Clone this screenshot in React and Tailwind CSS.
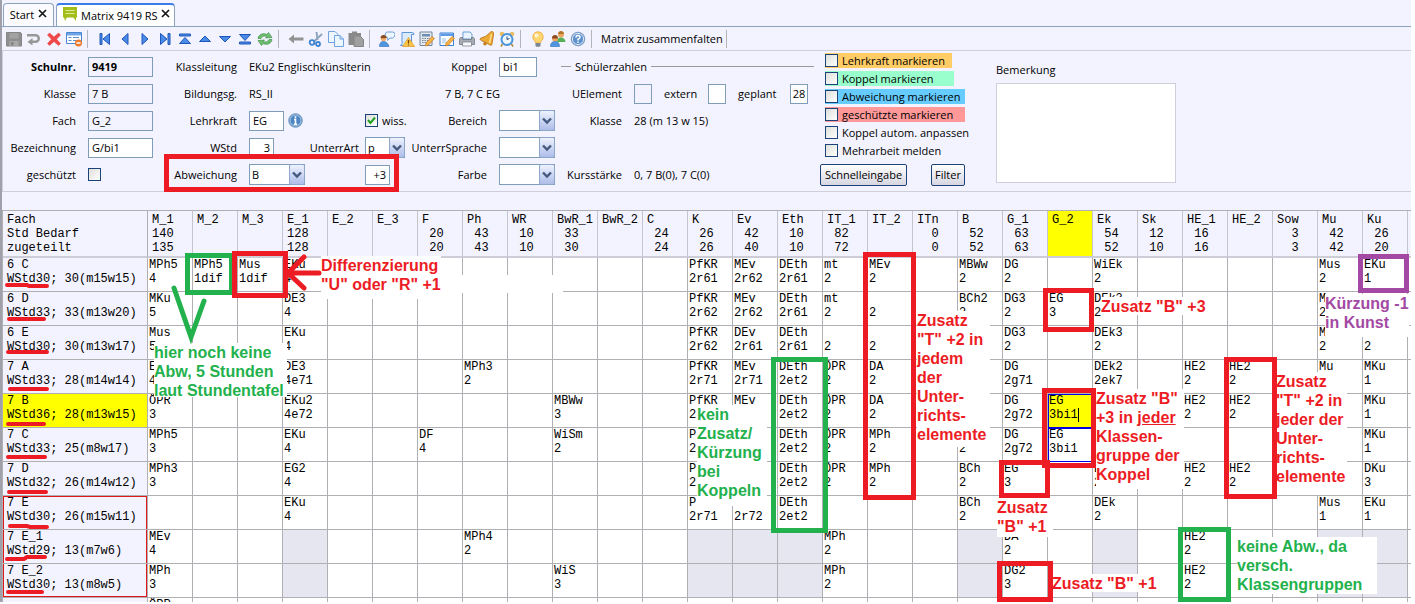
import clsx from "clsx";

const COLUMNS = [
  ["M_1", "140", "135"],
  ["M_2"],
  ["M_3"],
  ["E_1", "128", "128"],
  ["E_2"],
  ["E_3"],
  ["F", "20", "20"],
  ["Ph", "43", "43"],
  ["WR", "10", "10"],
  ["BwR_1", "33", "30"],
  ["BwR_2"],
  ["C", "24", "24"],
  ["K", "26", "26"],
  ["Ev", "42", "40"],
  ["Eth", "10", "10"],
  ["IT_1", "82", "72"],
  ["IT_2"],
  ["ITn", "0", "0"],
  ["B", "52", "52"],
  ["G_1", "63", "63"],
  ["G_2"],
  ["Ek", "54", "52"],
  ["Sk", "12", "10"],
  ["HE_1", "16", "16"],
  ["HE_2"],
  ["Sow", "3", "3"],
  ["Mu", "42", "42"],
  ["Ku", "26", "20"],
];

// cell values are "teacher|hours"
const ROWS = [
  {
    name: "6 C",
    info: "WStd30; 30(m15w15)",
    cells: { M_1: "MPh5|4", M_2: "MPh5|1dif", M_3: "Mus|1dif", E_1: "EKu|4", K: "PfKR|2r61", Ev: "MEv|2r62", Eth: "DEth|2r61", IT_1: "mt|2", IT_2: "MEv|2", B: "MBWw|2", G_1: "DG|2", Ek: "WiEk|2", Mu: "Mus|2", Ku: "EKu|1" },
  },
  {
    name: "6 D",
    info: "WStd33; 33(m13w20)",
    cells: { M_1: "MKu|5", E_1: "DE3|4", K: "PfKR|2r62", Ev: "MEv|2r62", Eth: "DEth|2r61", IT_1: "mt|2", IT_2: "|2", B: "BCh2|2", G_1: "DG3|2", G_2: "EG|3", Ek: "DEk3|2", Mu: "Mu|2" },
  },
  {
    name: "6 E",
    info: "WStd30; 30(m13w17)",
    cells: { M_1: "Mus|5", E_1: "EKu|4", K: "PfKR|2r62", Ev: "DEv|2r61", Eth: "DEth|2r61", IT_1: "|2", IT_2: "|2", G_1: "DG3|2", Ek: "DEk3|2", Mu: "M|2", Ku: "|2" },
  },
  {
    name: "7 A",
    info: "WStd33; 28(m14w14)",
    cells: { M_1: "E|4", E_1: "DE3|4e71", Ph: "MPh3|2", K: "PfKR|2r71", Ev: "MEv|2r71", Eth: "DEth|2et2", IT_1: "ÖPR|2", IT_2: "DA|2", G_1: "DG|2g71", Ek: "DEk2|2ek7", HE_1: "HE2|2", HE_2: "HE2|2", Mu: "Mu|", Ku: "MKu|1" },
  },
  {
    name: "7 B",
    info: "WStd36; 28(m13w15)",
    active: true,
    cells: { M_1: "ÖPR|3", E_1: "EKu2|4e72", BwR_1: "MBWw|3", K: "PfKR|2", Ev: "MEv|", Eth: "DEth|2et2", IT_1: "ÖPR|2", IT_2: "DA|2", G_1: "DG|2g72", G_2: "EG|3bi1", HE_1: "HE2|2", HE_2: "HE2|2", Ku: "MKu|1" },
  },
  {
    name: "7 C",
    info: "WStd33; 25(m8w17)",
    cells: { M_1: "MPh5|3", E_1: "EKu|4", F: "DF|4", BwR_1: "WiSm|2", K: "P|2", Eth: "DEth|2et2", IT_1: "ÖPR|2", IT_2: "MPh|2", B: "|2", G_1: "DG|2g72", G_2: "EG|3bi1", Ku: "MKu|1" },
  },
  {
    name: "7 D",
    info: "WStd32; 26(m14w12)",
    cells: { M_1: "MPh3|3", E_1: "EG2|4", K: "P|2", Eth: "DEth|2et2", IT_1: "ÖPR|2", IT_2: "MPh|2", B: "BCh|2", G_1: "EG|3", Ek: "D|2", HE_1: "HE2|2", HE_2: "HE2|2", Ku: "DKu|3" },
  },
  {
    name: "7 E",
    info: "WStd30; 26(m15w11)",
    frame: "border-t",
    cells: { E_1: "EKu|4", K: "P|2r71", Ev: "|2r72", Eth: "DEth|2et2", B: "BCh|2", Ek: "DEk|2", Mu: "Mus|1", Ku: "EKu|1" },
  },
  {
    name: "7 E_1",
    info: "WStd29; 13(m7w6)",
    frame: "",
    split: true,
    cells: { M_1: "MEv|4", Ph: "MPh4|2", IT_1: "MPh|2", G_1: "DA|2", HE_1: "HE2|2" },
  },
  {
    name: "7 E_2",
    info: "WStd30; 13(m8w5)",
    frame: "border-b",
    split: true,
    cells: { M_1: "MPh|3", BwR_1: "WiS|3", IT_1: "MPh|2", G_1: "DG2|3", HE_1: "HE2|2" },
  },
  { name: "", info: "", cells: { M_1: "ÖPR|3" } },
];

const LOCKED = ["E_1", "K", "Ev", "Eth", "B", "Ek", "Mu", "Ku"];

const FRAMES = [
  "left-[185px] top-[253px] w-[49px] h-[42px] border-[#22b14c]",
  "left-[232px] top-[251px] w-[56px] h-[47px] border-[#ed1c24]",
  "left-[863px] top-[252px] w-[53px] h-[248px] border-[#ed1c24]",
  "left-[771px] top-[357px] w-[57px] h-[176px] border-[#22b14c]",
  "left-[1043px] top-[288px] w-[51px] h-[44px] border-[#ed1c24]",
  "left-[1042px] top-[388px] w-[54px] h-[80px] border-[#ed1c24]",
  "left-[999px] top-[460px] w-[51px] h-[38px] border-[#ed1c24]",
  "left-[997px] top-[561px] w-[56px] h-[41px] border-[#ed1c24]",
  "left-[1178px] top-[527px] w-[53px] h-[75px] border-[#22b14c]",
  "left-[1224px] top-[357px] w-[53px] h-[142px] border-[#ed1c24]",
  "left-[1358px] top-[254px] w-[51px] h-[39px] border-[#a349a4]",
  "left-[164px] top-[154px] w-[235px] h-[38px] border-[#ed1c24]",
];

const NOTES = [
  { at: "left-[321px] top-[256px] w-[120px] h-[43px] text-[#ed1c24]", lines: ["Differenzierung", '"U" oder "R" +1'] },
  { at: "left-[441px] top-[275px] w-[122px] h-[18px]", lines: [] },
  { at: "left-[154px] top-[343px] w-[133px] h-[54px] text-[#22b14c]", lines: ["hier noch keine", "Abw, 5 Stunden", "laut Stundentafel"] },
  { at: "left-[917px] top-[311px] w-[73px] h-[136px] text-[#ed1c24]", lines: ["Zusatz", '"T" +2 in', "jedem", "der", "Unter-", "richts-", "elemente"] },
  { at: "left-[697px] top-[405px] w-[70px] h-[101px] text-[#22b14c]", lines: ["kein", "Zusatz/", "Kürzung", "bei", "Koppeln"] },
  { at: "left-[1101px] top-[297px] w-[83px] h-[18px] text-[#ed1c24]", lines: ['Zusatz "B" +3'] },
  { at: "left-[1096px] top-[389px] w-[88px] h-[100px] text-[#ed1c24]", lines: ['Zusatz "B"', <>+3 in <u key="u">jeder</u></>, "Klassen-", "gruppe der", "Koppel"] },
  { at: "left-[1276px] top-[372px] w-[71px] h-[123px] text-[#ed1c24]", lines: ["Zusatz", '"T" +2 in', "jeder der", "Unter-", "richts-", "elemente"] },
  { at: "left-[1325px] top-[294px] w-[84px] h-[43px] text-[#a349a4]", lines: ["Kürzung -1", "in Kunst"] },
  { at: "left-[997px] top-[498px] w-[56px] h-[39px] text-[#ed1c24]", lines: ["Zusatz", '"B" +1'] },
  { at: "left-[1052px] top-[574px] w-[110px] h-[18px] text-[#ed1c24]", lines: ['Zusatz "B" +1'] },
  { at: "left-[1237px] top-[537px] w-[140px] h-[57px] text-[#22b14c]", lines: ["keine Abw., da", "versch.", "Klassengruppen"] },
];

const tri = { fill: "#4a8be8", stroke: "#1f57b8", strokeWidth: 1, strokeLinejoin: "round" };

const ICONS = {
  save: (
    <>
      <path d="M0.5 1.5h14l1 1v12.5h-15z" fill="#8f8f8f" stroke="#858585" />
      <path d="M3.5 2h9v5.5h-9z" fill="#a3a3a3" />
      <path d="M3.5 10h9v5h-9z" fill="#a8a8a8" />
      <path d="M5 11h2.5v3.5H5z" fill="#858585" />
    </>
  ),
  undo: <path d="M1 3h8.500a4.500 4.500 0 0 1 0 9H6.500v2.500L1.500 11l5-4v2.500h3a2 2 0 0 0 0-4H1z" fill="#989898" />,
  remove: <path d="M3.500 2 8 6l4.500-4 2 2L10.500 8.200l4 4.300-2 2L8 10.500 3.500 14.500l-2-2 4-4.300L1.500 4z" fill="#f04848" stroke="#e03030" strokeWidth="0.500" />,
  form: (
    <>
      <path d="M0.500 1.500h15v11h-15z" fill="#fff" stroke="#4a86cf" />
      <path d="M1 2h14v2.500H1z" fill="#6fa5e6" />
      <path d="M2.500 6.500h3M2.500 9.500h3M7 6.500h6M7 9.500h4" stroke="#5a8fd0" />
      <circle cx="12.500" cy="12" r="3.500" fill="#ee7a2a" />
      <path d="M10.500 12h4" stroke="#fff" strokeWidth="1.500" />
    </>
  ),
  first: <><path d="M3 2.500h2v11H3z" {...tri} /><path d="M12.500 2.500v11L6 8z" {...tri} /></>,
  prev: <path d="M11 2.500v11L5 8z" {...tri} />,
  next: <path d="M5 2.500v11L11 8z" {...tri} />,
  last: <><path d="M11 2.500h2v11h-2z" {...tri} /><path d="M3.500 2.500v11L10 8z" {...tri} /></>,
  top: <><path d="M2.500 3h11v2h-11z" {...tri} /><path d="M2.500 12.500h11L8 6.500z" {...tri} /></>,
  up: <path d="M2.500 10.500h11L8 5z" {...tri} />,
  down: <path d="M2.500 5.500h11L8 11z" {...tri} />,
  bottom: <><path d="M2.500 11h11v2h-11z" {...tri} /><path d="M2.500 3.500h11L8 9.500z" {...tri} /></>,
  refresh: (
    <g fill="#72bd72" stroke="#3f9447" strokeWidth="0.700" strokeLinejoin="round">
      <path d="M1 7.500C1.500 3.500 6 1.500 10 3.500L11.500 1.500 15 6.500 8.500 7l1.500-1.500C7.500 4.500 5 5 4 7.500z" />
      <path d="M15 8.500c-.5 4-5 6-9 4L4.500 14.500 1 9.500 7.500 9 6 10.500c2.500 1 5 .5 6-2z" />
    </g>
  ),
  back: <path d="M0.500 8 6 3.500V6.500h9.500v3H6v3z" fill="#929292" />,
  cut: (
    <>
      <path d="M8.500 1 9.500 9M14 3 6.500 10" stroke="#8fa6bd" strokeWidth="2" />
      <circle cx="4" cy="11.500" r="2.300" fill="none" stroke="#3d84d0" strokeWidth="1.800" />
      <circle cx="10" cy="13" r="2" fill="none" stroke="#3d84d0" strokeWidth="1.800" />
    </>
  ),
  copy: (
    <g fill="#edf5ff" stroke="#6fa4e0">
      <path d="M0.500 0.500h6.500l3 3v8h-9.500z" />
      <path d="M6.500 4.500h5.500l3.500 3.500v7.500h-9z" />
      <path d="M12 4.500V8h3.500" fill="#bcd8f6" />
    </g>
  ),
  paste: (
    <>
      <path d="M0.500 2h3.500V0.500h5V2H13v12H0.500z" fill="#8a8a8a" />
      <path d="M6 5h6l3.500 3.500V15.500H6z" fill="#a0a0a0" stroke="#858585" />
    </>
  ),
  userTalk: (
    <>
      <path d="M8 1h5.500Q16 1 16 3.500T13.500 7H11L8.500 9.500 9 7Q6 6.500 6 4T8 1z" fill="#eef6ff" stroke="#6f9fd4" />
      <circle cx="4.500" cy="7.500" r="2.800" fill="#f0b070" />
      <path d="M1.500 7Q2 3.500 5 4t2.500 3Q4 7.500 1.500 7z" fill="#8a4a22" />
      <path d="M0.500 15.500Q0.500 10.500 4.500 10.500T10 15.500z" fill="#4f96e0" stroke="#2f6cb8" strokeWidth="0.600" />
    </>
  ),
  scriptWarn: (
    <>
      <path d="M3 1.500h10.500q1.500 0 1.500 2h-2.500v11H1.500Q4 13 3 9z" fill="#d9eafc" stroke="#5f97d6" />
      <path d="M9.500 6.500 15.500 15.500h-12z" fill="#fbc64a" stroke="#dd9a1f" strokeWidth="0.700" />
      <path d="M9.500 9v3.500M9.500 13.500v1" stroke="#7a4a00" strokeWidth="1.300" />
    </>
  ),
  calcEdit: (
    <>
      <path d="M1 1h12v13.500H1z" fill="#e4e7ec" stroke="#71879e" />
      <path d="M3 3h8v2.500H3z" fill="#6d8fb4" />
      <path d="M3 7.500h8M3 9.500h8M3 11.500h8" stroke="#74859a" strokeDasharray="1.500 1" />
      <path d="m7 12 6-6.500 2.500 2L9.500 14l-3 1z" fill="#f6b246" stroke="#c77b21" strokeWidth="0.700" />
    </>
  ),
  windowEdit: (
    <>
      <path d="M1 2h13.500v12.500H1z" fill="#fff" stroke="#3d7fd0" />
      <path d="M1.500 2.500h12.500V5H1.500z" fill="#5b9be8" />
      <path d="M3 7h4v5.500H3z" fill="#c9dff8" />
      <path d="m7 12 6-6.500 2.500 2L9.500 14l-3 1z" fill="#f6b246" stroke="#c77b21" strokeWidth="0.700" />
    </>
  ),
  print: (
    <>
      <path d="M4 1h7l2 2v5H4z" fill="#eaf4ff" stroke="#6f9fd4" />
      <path d="M1.500 6.500h2v2h9v-2h2l1 1.500v5.500H0.500V8z" fill="#a8adb5" stroke="#676d77" strokeWidth="0.700" />
      <path d="M3.500 11h9v4h-9z" fill="#f6f8fb" stroke="#71767f" strokeWidth="0.700" />
    </>
  ),
  bell: (
    <>
      <path d="M13.500 0.500Q15 1 14.500 4L13 13Q13 15 11 14L1.500 9Q0 8 2 7 7 6 10 2.500 12 0 13.500 0.500z" fill="#eda935" stroke="#b4741a" strokeWidth="0.800" />
      <path d="M12.500 3 10.500 12" stroke="#fbdc8a" strokeWidth="1.500" />
      <circle cx="6" cy="12.800" r="1.800" fill="#c47d1c" />
    </>
  ),
  alarm: (
    <>
      <circle cx="3" cy="3" r="2.300" fill="#e9bd61" />
      <circle cx="13" cy="3" r="2.300" fill="#e9bd61" />
      <path d="M3.500 13 2 15.500M12.500 13l1.500 2.500" stroke="#b0872f" strokeWidth="1.500" />
      <circle cx="8" cy="8.500" r="5.500" fill="#eef7ff" stroke="#4a94d9" strokeWidth="2" />
      <path d="M8 5.500v3l2.500-1" stroke="#2a4a70" fill="none" />
    </>
  ),
  bulb: (
    <>
      <path d="M8 0.700a5.300 5.300 0 0 1 3 9.600L10.500 12h-5L5 10.300A5.300 5.300 0 0 1 8 .7z" fill="#ffd670" stroke="#eda53a" strokeWidth="0.800" />
      <circle cx="6.500" cy="4.500" r="2" fill="#fff4cf" />
      <path d="M5.500 12h5v3l-1 .8h-3l-1-.8z" fill="#7c8794" />
    </>
  ),
  users: (
    <>
      <circle cx="11" cy="3.500" r="3" fill="#eda45c" />
      <path d="M8 3Q8.500 0 11 0t3 3z" fill="#b07428" />
      <path d="M7 11Q7 6.500 11 6.500T15.500 11z" fill="#55b055" />
      <circle cx="5" cy="7.500" r="3" fill="#eda45c" />
      <path d="M2 7.500Q2 4 5 4t3 3.500z" fill="#8a4a22" />
      <path d="M0.500 15.500Q0.500 10.500 5 10.500T9.500 15.500z" fill="#4f96e0" stroke="#2f6cb8" strokeWidth="0.600" />
    </>
  ),
  help: (
    <>
      <circle cx="8" cy="8" r="6.800" fill="#5f92cc" stroke="#7f9dc0" />
      <circle cx="8" cy="8" r="5.600" fill="none" stroke="#dce9f7" />
      <path d="M6 6.500Q6 4.500 8 4.500t2 1.800Q10 7.500 8 8.300V9.500M8 10.500v1.500" fill="none" stroke="#fff" strokeWidth="1.500" />
    </>
  ),
};

const TOOLBAR = [
  ["save", "undo", "remove", "form"],
  ["first", "prev", "next", "last", "top", "up", "down", "bottom", "refresh"],
  ["back", "cut", "copy", "paste"],
  ["userTalk", "scriptWarn", "calcEdit", "windowEdit", "print", "bell", "alarm"],
  ["bulb", "users", "help"],
];

function Close({ label }) {
  return (
    <button type="button" aria-label={label} className="mb-1">
      <svg viewBox="0 0 9 9" className="size-[9px]">
        <path d="M1 1l7 7M8 1L1 8" stroke="#111" strokeWidth="1.600" />
      </svg>
    </button>
  );
}

function Tabs() {
  return (
    <div className="flex h-[27px] shrink-0 items-end gap-[2px] border-b border-[#8ca3bd] pl-px">
      <div className="flex h-[23px] w-[51px] items-center justify-center gap-1 rounded-t-sm border border-b-0 border-[#8ca3bd] bg-[#fbfbff]">
        <button type="button">Start</button>
        <Close label="Start schließen" />
      </div>
      <div className="flex h-[23px] w-[119px] items-center gap-[3px] rounded-t-sm border border-t-2 border-b-0 border-[#8ca3bd] border-t-[#3a7be8] bg-white pl-[5px]">
        <svg viewBox="0 0 16 14" className="mb-1 h-[14px] w-4">
          <path d="M1 0h14v10.500H1z" fill="#a3bd1a" />
          <path d="M2 10h3l-2 4zM11 10h3v4z" fill="#a3bd1a" />
          <path d="M3.500 3.500h9M3.500 6.500h9" stroke="#e1ec9b" />
        </svg>
        <button type="button" className="whitespace-nowrap">Matrix 9419 RS</button>
        <Close label="Matrix schließen" />
      </div>
    </div>
  );
}

function Separator() {
  return <div className="mr-[7px] ml-[3px] h-[18px] w-px bg-[#b4b4bc]" />;
}

function Toolbar() {
  return (
    <div className="flex h-6 shrink-0 items-center border-b border-[#cfcfdc] pl-[2px]">
      {TOOLBAR.map((group, i) => (
        <div key={i} className="flex items-center">
          {group.map((icon) => (
            <button key={icon} type="button" aria-label={icon} className="flex w-5 justify-center">
              <svg viewBox="0 0 16 16" className="size-4">{ICONS[icon]}</svg>
            </button>
          ))}
          <Separator />
        </div>
      ))}
      <button type="button" className="ml-[2px] whitespace-nowrap">Matrix zusammenfalten</button>
      <Separator />
    </div>
  );
}

function Field({ className, ...props }) {
  return <input type="text" className={clsx("h-5 border border-[#7f9db9] px-[3px]", className)} {...props} />;
}

function Select({ id, value = "", className }) {
  return (
    <span className={clsx("relative inline-flex h-[21px]", className)}>
      <select id={id} defaultValue={value} className="h-full w-full appearance-none border border-[#7f9db9] bg-white pl-[2px]">
        <option>{value}</option>
      </select>
      <span className="pointer-events-none absolute inset-y-0 right-0 flex w-4 items-center justify-center rounded-xs border border-[#8da6cb] bg-linear-to-b from-[#eef2fe] to-[#aebde8]">
        <svg viewBox="0 0 10 8" className="h-2 w-[10px]">
          <path d="M1 1.500l4 4 4-4" fill="none" stroke="#45597f" strokeWidth="2.400" />
        </svg>
      </span>
    </span>
  );
}

function Check({ id, checked }) {
  return (
    <span className="relative inline-flex">
      <input id={id} type="checkbox" defaultChecked={checked} className="peer size-[13px] appearance-none border border-[#1c4379] bg-linear-to-br from-[#dededa] to-white" />
      <svg viewBox="0 0 13 13" className="pointer-events-none absolute inset-0 hidden size-[13px] peer-checked:block">
        <path d="M3 6l2.500 3L10 3.500" fill="none" stroke="#21a121" strokeWidth="2" />
      </svg>
    </span>
  );
}

function Row({ label, id, bold, children }) {
  return (
    <div className="flex h-[27px] items-center gap-3">
      <label htmlFor={id} className={clsx("flex-1 text-right whitespace-nowrap", bold && "font-bold")}>{label}</label>
      {children}
    </div>
  );
}

const MARKERS = [
  ["Lehrkraft markieren", "bg-[#ffcc66] w-[127px]"],
  ["Koppel markieren", "bg-[#99ffcc] w-[129px]"],
  ["Abweichung markieren", "bg-[#66ccff] w-[140px]"],
  ["geschützte markieren", "bg-[#ff9999] w-[140px]"],
  ["Koppel autom. anpassen", "w-[150px]"],
  ["Mehrarbeit melden", "w-[140px]"],
];

function Details() {
  return (
    <form className="flex h-[141px] shrink-0 items-start border-b border-l border-[#cfcfdc] pt-[2px]">
      <div className="w-[150px]">
        <Row label="Schulnr." id="schulnr" bold><Field id="schulnr" defaultValue="9419" className="w-[65px] bg-[#f3f3ff] font-bold" /></Row>
        <Row label="Klasse" id="klasse"><Field id="klasse" defaultValue="7 B" className="w-[65px] bg-[#f3f3ff]" /></Row>
        <Row label="Fach" id="fach"><Field id="fach" defaultValue="G_2" className="w-[65px] bg-[#f3f3ff]" /></Row>
        <Row label="Bezeichnung" id="bez"><Field id="bez" defaultValue="G/bi1" className="w-[65px] bg-white" /></Row>
        <Row label="geschützt" id="gesch"><span className="flex w-[65px]"><Check id="gesch" /></span></Row>
      </div>

      <div className="w-[254px] pl-3">
        <div className="flex h-[27px] items-center gap-3">
          <span className="w-[72px] text-right">Klassleitung</span>
          <span className="whitespace-nowrap">EKu2 Englischkünslterin</span>
        </div>
        <div className="flex h-[27px] items-center gap-3">
          <span className="w-[72px] text-right">Bildungsg.</span>
          <span>RS_II</span>
        </div>
        <div className="flex h-[27px] items-center gap-3">
          <label htmlFor="lehrkraft" className="w-[72px] text-right">Lehrkraft</label>
          <span className="flex w-[104px] items-center gap-1">
            <Field id="lehrkraft" defaultValue="EG" className="w-[35px] bg-white" />
            <button type="button" aria-label="Info">
              <svg viewBox="0 0 16 16" className="size-[15px]">
                <circle cx="8" cy="8" r="7.300" fill="#4d86c2" stroke="#7a9cc0" />
                <circle cx="8" cy="8" r="5.900" fill="none" stroke="#bdd3ea" />
                <path d="M8 3.500v2M6.500 7H8v4.500M6.200 12h3.600" fill="none" stroke="#fff" strokeWidth="1.700" />
              </svg>
            </button>
          </span>
          <span className="flex items-center gap-1">
            <Check id="wiss" checked />
            <label htmlFor="wiss">wiss.</label>
          </span>
        </div>
        <div className="flex h-[27px] items-center gap-3">
          <label htmlFor="wstd" className="w-[72px] text-right">WStd</label>
          <Field id="wstd" defaultValue="3" className="w-[25px] bg-white text-right" />
          <span className="flex items-center gap-[6px]">
            <label htmlFor="art" className="w-[73px] text-right">UnterrArt</label>
            <Select id="art" value="p" className="w-10" />
          </span>
        </div>
        <div className="flex h-[27px] items-center gap-3">
          <label htmlFor="abw" className="w-[72px] text-right">Abweichung</label>
          <span className="flex w-[104px]"><Select id="abw" value="B" className="w-14" /></span>
          <Field aria-label="Abweichung Stunden" defaultValue="+3" className="w-[25px] bg-white text-right" />
        </div>
      </div>

      <div className="w-[148px]">
        <Row label="Koppel" id="koppel"><span className="flex w-14"><Field id="koppel" defaultValue="bi1" className="w-[38px] bg-white" /></span></Row>
        <div className="flex h-[27px] items-center pl-[38px]">7 B, 7 C EG</div>
        <Row label="Bereich" id="bereich"><Select id="bereich" className="w-14" /></Row>
        <Row label="UnterrSprache" id="sprache"><Select id="sprache" className="w-14" /></Row>
        <Row label="Farbe" id="farbe"><Select id="farbe" className="w-14" /></Row>
      </div>

      <div className="ml-[6px] w-[253px]">
        <div className="flex h-[27px] items-center gap-1">
          <span className="h-px w-[10px] bg-[#9a9a9a]" />
          <span>Schülerzahlen</span>
          <span className="h-px flex-1 bg-[#9a9a9a]" />
        </div>
        <div className="flex h-[27px] items-center gap-3">
          <label htmlFor="uel" className="w-[61px] text-right">UElement</label>
          <Field id="uel" className="w-[18px] bg-[#f3f3ff]" />
          <label htmlFor="ext" className="w-8">extern</label>
          <Field id="ext" className="w-[18px] bg-white" />
          <label htmlFor="gepl" className="w-10">geplant</label>
          <input id="gepl" type="text" defaultValue="28" className="h-5 w-[18px] border border-[#7f9db9] bg-white text-center" />
        </div>
        <div className="flex h-[27px] items-center gap-3">
          <span className="w-[61px] text-right">Klasse</span>
          <span>28 (m 13 w 15)</span>
        </div>
        <div className="mt-[27px] flex h-[27px] items-center gap-3">
          <span className="w-[61px] text-right">Kursstärke</span>
          <span>0, 7 B(0), 7 C(0)</span>
        </div>
      </div>

      <div className="ml-[6px] w-[150px]">
        <div className="flex flex-col gap-[3px] pl-[5px]">
          {MARKERS.map(([label, style], i) => (
            <div key={label} className={clsx("flex h-[15px] items-center gap-1", style)}>
              <Check id={`mark${i}`} />
              <label htmlFor={`mark${i}`} className="whitespace-nowrap">{label}</label>
            </div>
          ))}
        </div>
        <div className="mt-[6px] flex gap-6">
          <button type="button" className="h-[22px] w-[87px] rounded-xs border border-[#1c4379] bg-linear-to-b from-white to-[#d6d6e2]">Schnelleingabe</button>
          <button type="button" className="h-[22px] w-[34px] rounded-xs border border-[#1c4379] bg-linear-to-b from-white to-[#d6d6e2]">Filter</button>
        </div>
      </div>

      <div className="ml-[26px] flex w-[180px] flex-col pt-[10px]">
        <label htmlFor="bem" className="h-5">Bemerkung</label>
        <textarea id="bem" className="h-[100px] resize-none border border-[#cfcfdc] bg-white" />
      </div>
    </form>
  );
}

function Matrix() {
  return (
    <table className="w-full table-fixed border-separate border-spacing-0 border-t border-l border-[#b0b0b4] font-['Liberation_Mono',monospace] text-[12px] leading-[14px]">
      <colgroup>
        <col className="w-[145px]" />
        {COLUMNS.map(([name]) => <col key={name} className="w-[45px]" />)}
        <col />
      </colgroup>
      <thead>
        <tr className="h-[47px]">
          <th scope="col" className="border-r border-b-2 border-r-[#b0b0b4] border-b-[#cdcdd8] pt-[2px] pl-1 text-left align-top font-normal">
            Fach<br />Std Bedarf<br />zugeteilt
          </th>
          {COLUMNS.map(([name, need = "", given = ""]) => (
            <th
              key={name}
              scope="col"
              className={clsx(
                "border-r border-b-2 border-r-[#c4c4cc] border-b-[#cdcdd8] pt-[2px] pl-1 text-left align-top font-normal whitespace-pre",
                name === "G_2" && "bg-[#ffff00]",
              )}
            >
              {[name, need.padStart(3), given.padStart(3)].join("\n")}
            </th>
          ))}
          <td className="border-b-2 border-[#cdcdd8]" />
        </tr>
      </thead>
      <tbody>
        {ROWS.map((row) => (
          <tr key={row.name} className="h-[34px]">
            <th
              scope="row"
              className={clsx("relative border-r border-b border-[#b0b0b4] p-0 pl-1 text-left align-top font-normal whitespace-nowrap", row.active && "bg-[#ffff00]")}
            >
              {row.name}<br />{row.info}
              {row.frame !== undefined && <span className={clsx("absolute inset-0 border-x border-[#e01818]", row.frame)} />}
            </th>
            {COLUMNS.map(([name]) => {
              const [teacher, hours] = (row.cells[name] ?? "|").split("|");
              const coupled = hours === "3bi1";
              return (
                <td
                  key={name}
                  className={clsx(
                    "border-r border-b border-[#b0b0b4] p-0 align-top whitespace-nowrap",
                    row.split && LOCKED.includes(name) ? "bg-[#e6e6f1]" : coupled && row.active ? "bg-[#ffff00]" : "bg-white",
                    coupled && "outline-1 -outline-offset-1 outline-[#0000e0]",
                  )}
                >
                  <div className="h-[33px] pl-px">
                    {teacher}<br />{hours}
                    {coupled && row.active && <span className="border-r border-black" />}
                  </div>
                </td>
              );
            })}
            <td className="border-b border-[#b0b0b4] bg-white" />
          </tr>
        ))}
      </tbody>
    </table>
  );
}

function Annotations() {
  return (
    <div className="pointer-events-none absolute inset-0 font-['Liberation_Sans',sans-serif] text-[16px] leading-[19px] font-bold">
      {NOTES.map(({ at, lines }) => (
        <div key={at} className={clsx("absolute bg-white whitespace-nowrap", at)}>
          {lines.map((line, i) => <div key={i}>{line}</div>)}
        </div>
      ))}
      {FRAMES.map((frame) => <div key={frame} className={clsx("absolute border-5", frame)} />)}
      <svg viewBox="0 0 420 604" className="absolute top-0 left-0 h-[604px] w-[420px]" fill="none" strokeLinecap="round">
        <path d="M319 273H289M304 257L288 273 304 288" stroke="#ed1c24" strokeWidth="5" />
        <path d="M174 288L191 337 204 301" stroke="#22b14c" strokeWidth="5" />
        <g stroke="#ed1c24" strokeWidth="4">
          <path d="M7 285H27L29 286H47" />
          <path d="M9 319H44M8 352H47M10 389H47M8 424H44M8 457H45M9 492H46" />
          <path d="M10 526H27L30 527H47" />
          <path d="M7 559H24L27 557H45" />
          <path d="M8 592H42" />
        </g>
      </svg>
    </div>
  );
}

export default function App() {
  return (
    <div className="h-screen bg-white pr-1 pb-[2px]">
      <div className="relative flex h-full flex-col overflow-hidden border-l-2 border-[#a0a0aa] bg-[#f3f3ff] font-['Open_Sans',sans-serif] text-[11px] leading-[14px] text-black">
        <Tabs />
        <Toolbar />
        <Details />
        <div className="pt-[18px]">
          <Matrix />
        </div>
        <div className="absolute inset-y-0 -left-[2px] w-full">
          <Annotations />
        </div>
      </div>
    </div>
  );
}
